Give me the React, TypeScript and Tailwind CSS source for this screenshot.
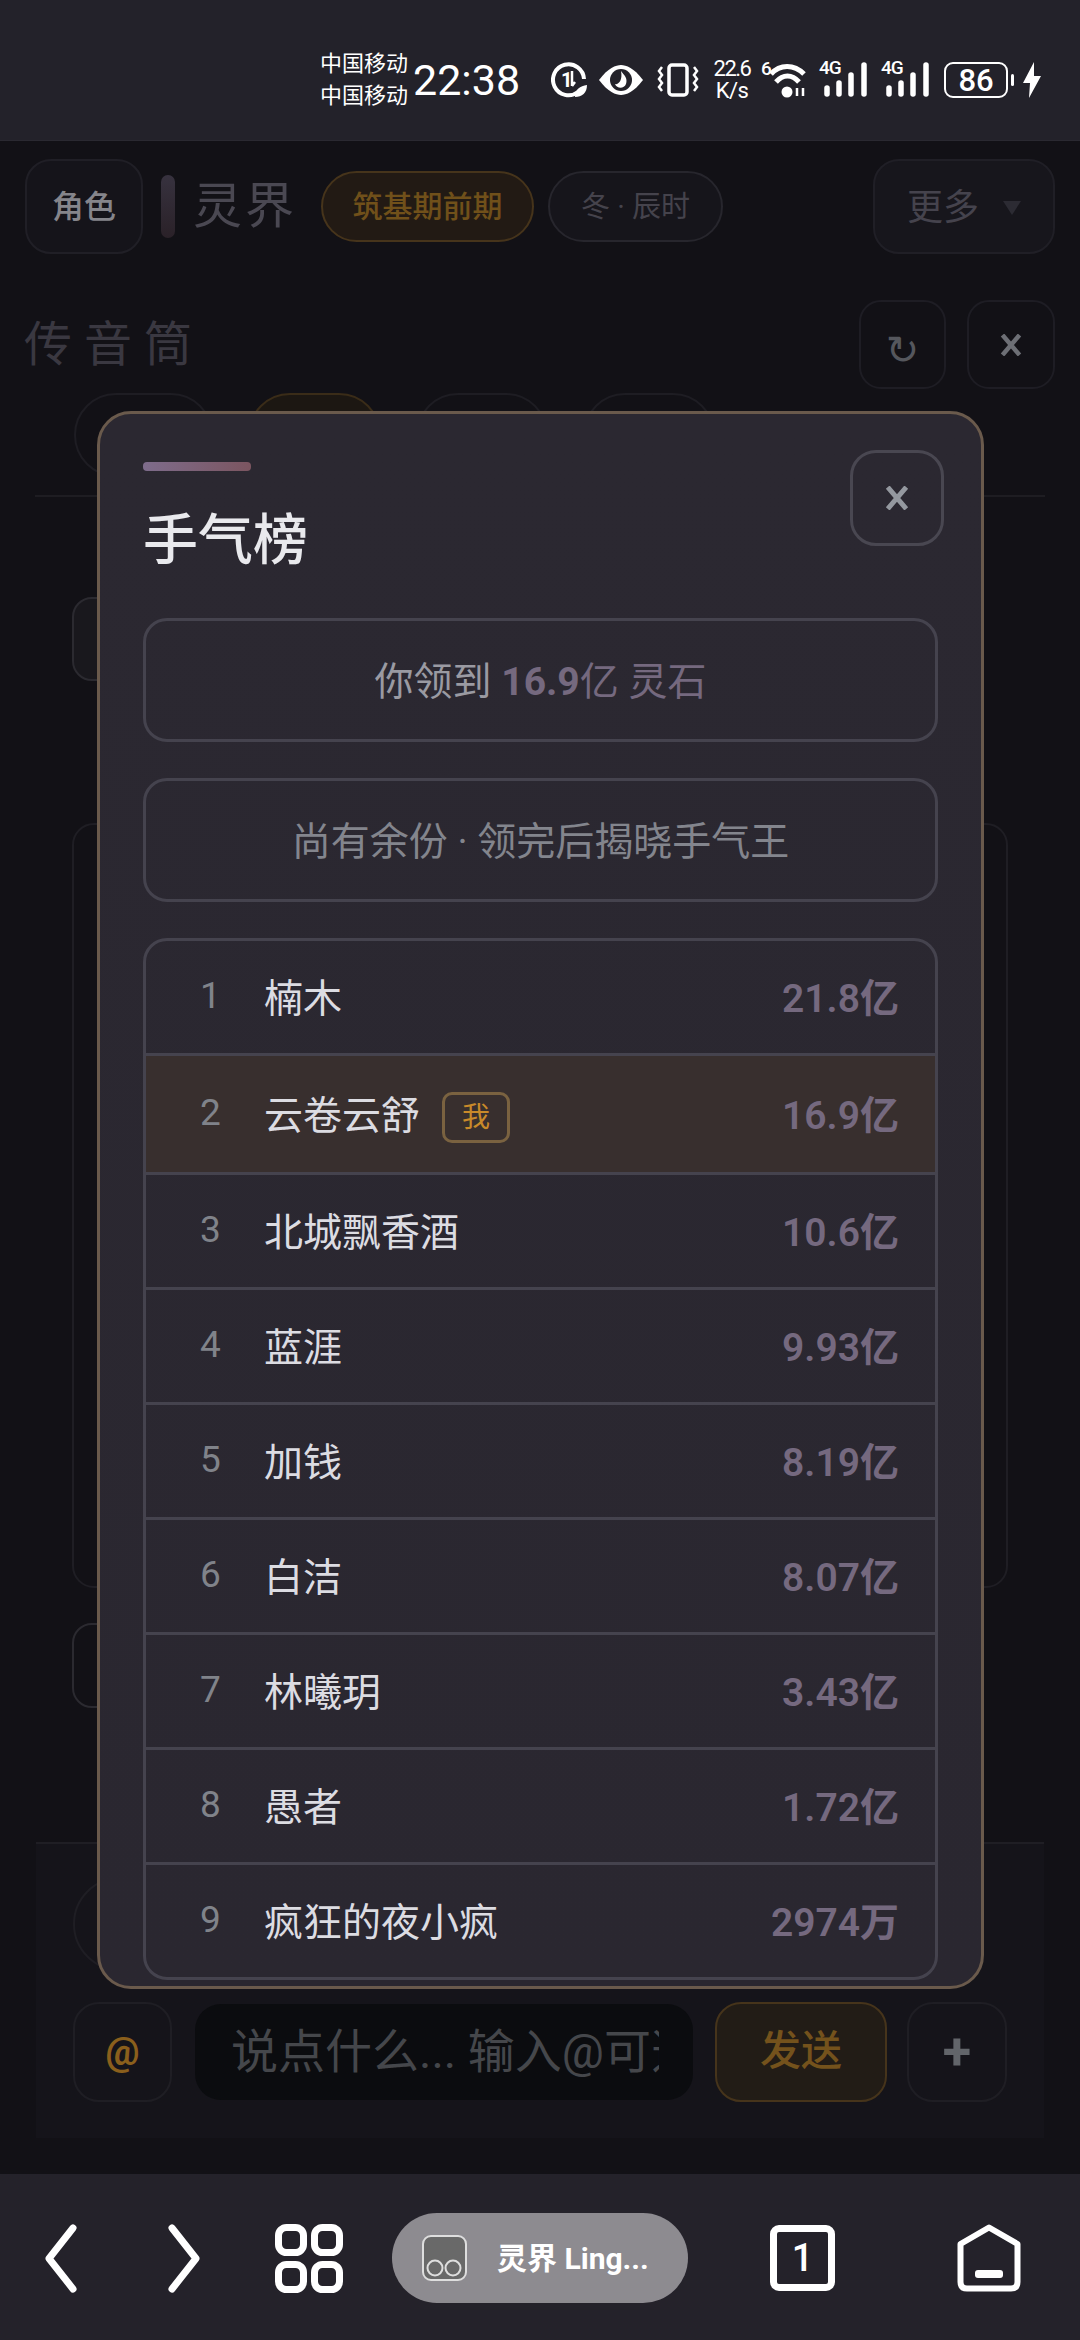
import { ReactNode } from "react";

const font = "font-['Roboto','Noto_Sans_CJK_SC',sans-serif]";

const rows = [
  { rank: 1, name: "楠木", value: "21.8亿" },
  { rank: 2, name: "云卷云舒", value: "16.9亿", me: true },
  { rank: 3, name: "北城飘香酒", value: "10.6亿" },
  { rank: 4, name: "蓝涯", value: "9.93亿" },
  { rank: 5, name: "加钱", value: "8.19亿" },
  { rank: 6, name: "白洁", value: "8.07亿" },
  { rank: 7, name: "林曦玥", value: "3.43亿" },
  { rank: 8, name: "愚者", value: "1.72亿" },
  { rank: 9, name: "疯狂的夜小疯", value: "2974万" },
];

function CloseMark({ color, size = 22 }: { color: string; size?: number }) {
  return (
    <svg width={size} height={size} viewBox="0 0 22 22">
      <path d="M2.5 1 L19.5 21 M19.5 1 L2.5 21" stroke={color} strokeWidth="4.5" fill="none" />
    </svg>
  );
}

function Signal() {
  return (
    <div className="relative w-[50px] h-[36px]">
      <span className="absolute left-0 top-[-4px] text-[19px] leading-[20px] font-medium tracking-[-1px] text-white">4G</span>
      <svg width="50" height="36" viewBox="0 0 50 36" className="absolute left-0 top-0">
        <g stroke="#fff" strokeWidth="5.5" strokeLinecap="round">
          <path d="M8 26 V32" />
          <path d="M20 21 V32" />
          <path d="M32 13 V32" />
          <path d="M45 3 V32" />
        </g>
      </svg>
    </div>
  );
}

function StatusBar() {
  return (
    <div className="h-[141px] shrink-0 bg-[#23222a] border-b border-[#2a2931] flex items-center pl-[320px] pr-[38px] pt-[20px] text-white">
      <div className="flex flex-col text-[22px] leading-[32px] w-[93px] shrink-0">
        <span>中国移动</span>
        <span>中国移动</span>
      </div>
      <span className="text-[43px] leading-[50px] w-[138px] shrink-0">22:38</span>
      <div className="flex items-center">
        <svg width="37" height="36" viewBox="0 0 37 36" className="shrink-0">
          <path d="M27 30 A15.5 15.5 0 1 1 33 17" stroke="#fff" strokeWidth="4" fill="none" />
          <text x="10" y="25" fontSize="20" fontWeight="700" fill="#fff">1</text>
          <path d="M21 9 V24 M21 24 l3 -4" stroke="#fff" strokeWidth="2.5" fill="none" />
          <path d="M24 35 C24 27 29 24 36 23 C36 31 31 35 24 35Z" fill="#fff" />
        </svg>
        <svg width="46" height="30" viewBox="0 0 46 30" className="ml-[10px] shrink-0">
          <path d="M1 15 C10 3 18 0 23 0 C28 0 36 3 45 15 C36 27 28 30 23 30 C18 30 10 27 1 15Z" fill="#fff" />
          <circle cx="23" cy="15" r="11" fill="#23222a" />
          <path d="M23 6 C26 10 30 13 28 19 C26 24 19 24 17 19 C20 20 25 16 23 6Z" fill="#fff" />
        </svg>
        <svg width="44" height="34" viewBox="0 0 44 34" className="ml-[12px] shrink-0">
          <rect x="13" y="2" width="18" height="30" rx="3" stroke="#fff" strokeWidth="3.5" fill="none" />
          <path d="M6 4 l-3 4 l3 4 l-3 4 l3 4 l-3 4 l3 4" stroke="#fff" strokeWidth="2.5" fill="none" />
          <path d="M38 4 l3 4 l-3 4 l3 4 l-3 4 l3 4 l-3 4" stroke="#fff" strokeWidth="2.5" fill="none" />
        </svg>
        <div className="ml-[10px] w-[44px] shrink-0 flex flex-col items-center text-[22px] leading-[22px]">
          <span className="tracking-[-1.5px]">22.6</span>
          <span className="tracking-[-0.5px]">K/s</span>
        </div>
        <div className="relative ml-[7px] w-[48px] h-[36px] shrink-0">
          <span className="absolute left-0 top-[-3px] text-[19px] leading-[20px] font-medium">6</span>
          <svg width="48" height="36" viewBox="0 0 48 36" className="absolute left-0 top-0">
            <path d="M10 12 C19 2 33 2 43 12" stroke="#fff" strokeWidth="5" fill="none" />
            <path d="M15 20 C22 12 31 12 38 20" stroke="#fff" strokeWidth="5" fill="none" />
            <circle cx="26" cy="30" r="5.5" fill="#fff" />
            <path d="M36 26 V34 M42 26 V34" stroke="#fff" strokeWidth="2.5" />
          </svg>
        </div>
        <div className="ml-[10px] shrink-0"><Signal /></div>
        <div className="ml-[12px] shrink-0"><Signal /></div>
        <div className="ml-[13px] w-[64px] h-[36px] shrink-0 rounded-[9px] border-[2.5px] border-white flex items-center justify-center text-[31px] leading-none font-medium">
          86
        </div>
        <div className="ml-[3px] w-[3px] h-[12px] rounded-full bg-white shrink-0" />
        <svg width="20" height="36" viewBox="0 0 20 36" className="ml-[8px] shrink-0">
          <path d="M12 0 L1 21 H8 L7 36 L19 14 H12Z" fill="#fff" />
        </svg>
      </div>
    </div>
  );
}

function DimPage() {
  return (
    <div className="flex-1 min-h-0 flex flex-col">
      <div className="flex items-center px-[25px] pt-[18px] h-[113px] shrink-0">
        <div className="w-[118px] h-[95px] rounded-[26px] border-2 border-[#201f26] bg-[#15141a] flex items-center justify-center text-[32px] font-medium text-[#85858b]">
          角色
        </div>
        <div className="ml-[18px] w-[14px] h-[63px] rounded-full bg-gradient-to-b from-[#37323f] to-[#2a2128]" />
        <span className="ml-[18px] text-[49px] tracking-[3px] text-[#4a4852]">灵界</span>
        <div className="ml-[24px] w-[213px] h-[71px] rounded-full border-2 border-[#46341b] bg-[#221a14] flex items-center justify-center text-[30px] font-medium text-[#70501a]">
          筑基期前期
        </div>
        <div className="ml-[14px] w-[175px] h-[71px] rounded-full border-2 border-[#27262d] bg-[#16151b] flex items-center justify-center text-[29px] text-[#45434c] pt-[2px]">
          冬 · 辰时
        </div>
        <div className="ml-auto w-[182px] h-[95px] rounded-[26px] border-2 border-[#201f26] bg-[#17161c] flex items-center justify-center gap-[24px] text-[36px] text-[#45434d] pt-[3px]">
          更多
          <span className="w-0 h-0 border-l-[9px] border-r-[9px] border-t-[14px] border-l-transparent border-r-transparent border-t-[#2c2b33]" />
        </div>
      </div>

      <div className="flex items-center justify-between pl-[24px] pr-[25px] mt-[46px] h-[89px] shrink-0">
        <span className="text-[48px] tracking-[12px] text-[#3a3841]">传音筒</span>
        <div className="flex gap-[21px]">
          <div className="w-[87px] h-[89px] rounded-[22px] border-2 border-[#1e1d24] flex items-center justify-center font-['DejaVu_Sans'] text-[40px] text-[#55575d] pt-[10px]">
            ↻
          </div>
          <div className="w-[88px] h-[89px] rounded-[22px] border-2 border-[#1e1d24] flex items-center justify-center">
            <CloseMark color="#6d6f75" />
          </div>
        </div>
      </div>

      <div className="flex pl-[74px] gap-[35px] mt-[4px] h-[84px] shrink-0">
        <div className="w-[139px] rounded-full border-2 border-[#1e1d23]" />
        <div className="w-[133px] rounded-full border-2 border-[#3a2c18] bg-[#1c1712]" />
        <div className="w-[132px] rounded-full border-2 border-[#1e1d23]" />
        <div className="w-[132px] rounded-full border-2 border-[#1e1d23]" />
      </div>

      <div className="mx-[35px] mt-[18px] h-[2px] bg-[#1e1d22] shrink-0" />

      <div className="ml-[72px] mt-[100px] w-[160px] h-[84px] rounded-[20px] border-2 border-[#2b2a30] bg-[#19181d] shrink-0" />

      <div className="mx-[72px] mt-[142px] h-[765px] rounded-[22px] border-2 border-[#1f1e24] shrink-0" />

      <div className="ml-[72px] mt-[35px] w-[160px] h-[85px] rounded-[20px] border-2 border-[#2b2a30] shrink-0" />

      <div className="mx-[36px] mt-[134px] h-[296px] border-t-2 border-[#1f1e24] bg-[#15141a] px-[37px] pt-[33px] shrink-0">
        <div className="w-[130px] h-[94px] rounded-full border-2 border-[#1f1e24]" />
        <div className="flex items-center mt-[31px] h-[100px]">
          <div className="w-[99px] h-[100px] rounded-[26px] border-2 border-[#1f1e24] flex items-center justify-center text-[38px] font-bold text-[#8a5f1c]">
            @
          </div>
          <div className="ml-[23px] w-[498px] h-[96px] rounded-[26px] bg-[#0b0c0f] pl-[36px] pr-[34px] flex items-center">
            <div className="w-full overflow-hidden">
              <span className="text-[47px] whitespace-nowrap text-[#45474b]">说点什么... 输入@可选择</span>
            </div>
          </div>
          <div className="ml-[22px] w-[172px] h-[100px] rounded-[26px] border-2 border-[#46341b] bg-[#221c16] flex items-center justify-center text-[41px] font-medium text-[#74521c]">
            发送
          </div>
          <div className="ml-[20px] w-[100px] h-[100px] rounded-[26px] border-2 border-[#1f1e24] flex items-center justify-center text-[52px] font-bold text-[#62656a]">
            +
          </div>
        </div>
      </div>
    </div>
  );
}

function BottomNav() {
  return (
    <div className="h-[166px] shrink-0 bg-[#24222a] flex items-center pl-[45px] pt-[2px]">
      <svg width="32" height="69" viewBox="0 0 32 69" className="shrink-0">
        <path d="M28 4 L4 34.5 L28 65" stroke="#fff" strokeWidth="7" strokeLinecap="round" strokeLinejoin="round" fill="none" />
      </svg>
      <svg width="32" height="69" viewBox="0 0 32 69" className="ml-[91px] shrink-0">
        <path d="M4 4 L28 34.5 L4 65" stroke="#fff" strokeWidth="7" strokeLinecap="round" strokeLinejoin="round" fill="none" />
      </svg>
      <svg width="68" height="69" viewBox="0 0 68 69" className="ml-[75px] shrink-0">
        <g stroke="#fff" strokeWidth="7" fill="none">
          <rect x="3.5" y="3.5" width="25" height="25" rx="8" />
          <rect x="39.5" y="3.5" width="25" height="25" rx="8" />
          <rect x="3.5" y="40.5" width="25" height="25" rx="8" />
          <rect x="39.5" y="40.5" width="25" height="25" rx="8" />
        </g>
      </svg>
      <div className="ml-[49px] w-[296px] h-[90px] rounded-full bg-[#8d8b90] flex items-center pl-[30px] shrink-0">
        <svg width="45" height="46" viewBox="0 0 45 46" className="shrink-0">
          <rect x="1" y="1" width="43" height="44" rx="8" fill="#696969" stroke="#dedede" strokeWidth="2" />
          <circle cx="13" cy="33" r="7.5" fill="none" stroke="#dedede" strokeWidth="2" />
          <circle cx="31" cy="33" r="7.5" fill="none" stroke="#dedede" strokeWidth="2" />
        </svg>
        <span className="ml-[30px] text-[30px] font-bold text-white whitespace-nowrap">灵界 Ling...</span>
      </div>
      <div className="ml-[82px] w-[65px] h-[66px] rounded-[9px] border-[7px] border-white flex items-center justify-center text-[38px] leading-none font-medium text-white shrink-0">
        1
      </div>
      <svg width="64" height="68" viewBox="0 0 64 68" className="ml-[122px] shrink-0">
        <path d="M3.5 20 L32 3.5 L60.5 20 V58 Q60.5 64.5 54 64.5 H10 Q3.5 64.5 3.5 58Z" stroke="#fff" strokeWidth="6" strokeLinejoin="round" fill="none" />
        <rect x="18" y="46" width="28" height="8" rx="3" fill="#fff" />
      </svg>
    </div>
  );
}

function Notice({ children, muted }: { children: ReactNode; muted?: boolean }) {
  return (
    <div
      className={`h-[124px] rounded-[24px] border-[3px] border-[#45434e] flex items-center justify-center text-[39px] pt-[5px] shrink-0 ${
        muted ? "text-[#83858d]" : "text-[#9a9aa2]"
      }`}
    >
      {children}
    </div>
  );
}

function LuckModal() {
  return (
    <div className="absolute left-[97px] top-[411px] w-[887px] h-[1578px] rounded-[34px] border-[3px] border-[#6a5a4c] bg-gradient-to-b from-[#2b2831] to-[#2a2730] pl-[43px] pr-[43px] flex flex-col overflow-hidden">
      <div className="flex justify-between shrink-0 h-[133px]">
        <div className="pt-[48px]">
          <div className="w-[108px] h-[9px] rounded-[4px] bg-gradient-to-r from-[#7e6c8c] to-[#7b5560]" />
          <h1 className="mt-[33px] text-[55px] leading-[72px] font-medium text-[#e9e9ed]">手气榜</h1>
        </div>
        <div className="mt-[36px] -mr-[6px] w-[94px] h-[96px] rounded-[26px] border-[3px] border-[#494751] flex items-center justify-center">
          <CloseMark color="#94989f" size={24} />
        </div>
      </div>

      <div className="mt-[71px] flex flex-col gap-[36px] shrink-0">
        <Notice>
          <span>
            你领到 <b className="font-bold text-[#75697f]">16.9</b>
            <span className="text-[#75697f]">亿 灵石</span>
          </span>
        </Notice>
        <Notice muted>尚有余份 · 领完后揭晓手气王</Notice>
      </div>

      <div className="mt-[36px] h-[1042px] rounded-[24px] border-[3px] border-[#45434e] overflow-hidden shrink-0 flex flex-col">
        {rows.map((row, i) => (
          <div
            key={row.rank}
            className={`flex items-center pl-[50px] pr-[36px] shrink-0 ${i > 0 ? "border-t-[3px] border-[#45434e]" : ""} ${
              row.me ? "h-[119px] bg-[#382f2e]" : i === 0 ? "h-[112px]" : "h-[115px]"
            }`}
          >
            <span className="w-[68px] text-[37px] text-[#80838a] -mt-[2px] pl-[4px]">{row.rank}</span>
            <span className="text-[39px] text-[#dcdce2] whitespace-nowrap pt-[5px]">{row.name}</span>
            {row.me && (
              <span className="ml-[22px] mt-[7px] w-[68px] h-[51px] rounded-[10px] border-[3px] border-[#7a6240] flex items-center justify-center text-[28px] text-[#c98a2a]">
                我
              </span>
            )}
            <span className="ml-auto text-[39px] font-semibold text-[#75697f] whitespace-nowrap pt-[5px]">{row.value}</span>
          </div>
        ))}
      </div>
    </div>
  );
}

export default function App() {
  return (
    <div className={`relative w-[1080px] h-[2340px] overflow-hidden bg-[#121116] flex flex-col ${font}`}>
      <StatusBar />
      <DimPage />
      <BottomNav />
      <LuckModal />
    </div>
  );
}
